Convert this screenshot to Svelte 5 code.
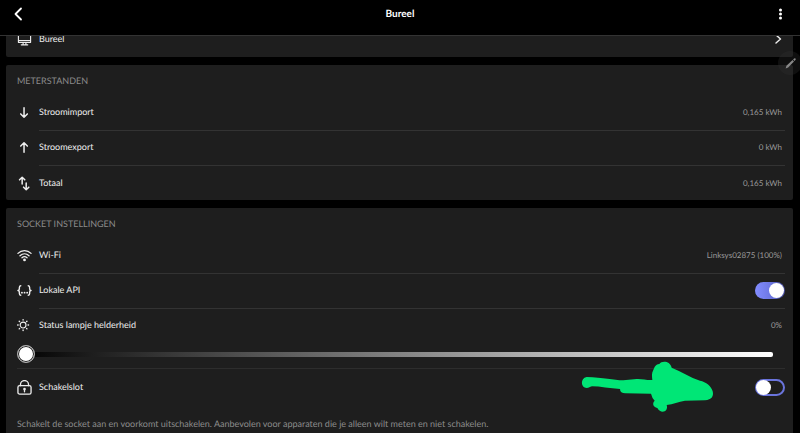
<script>
	let brightness = 0;
	let localApi = true;
	let switchLock = false;

	const readings = [
		{ icon: "down", label: "Stroomimport", value: "0,165 kWh" },
		{ icon: "up", label: "Stroomexport", value: "0 kWh" },
		{ icon: "both", label: "Totaal", value: "0,165 kWh" },
	];
</script>

<main>
	<header>
		<button class="back" aria-label="Terug">
			<svg viewBox="0 0 16 16"><path d="M10 2.500 4.500 8l5.500 5.500" stroke-width="1.800" /></svg>
		</button>
		<h1>Bureel</h1>
		<button class="more" aria-label="Meer">
			<svg viewBox="0 0 16 16" class="solid">
				<circle cx="7.500" cy="4" r="1.500" />
				<circle cx="7.500" cy="8" r="1.500" />
				<circle cx="7.500" cy="12" r="1.500" />
			</svg>
		</button>
	</header>

	<div class="body">
		<section class="device">
			<a href="#bureel" class="row">
				<svg class="icon" viewBox="0 0 16 16">
					<path d="M1.500 1.500h13v9.500h-13zM1.500 9h13M6.500 11v2.500M9.500 11v2.500M4.500 13.700h7" stroke-width="1.200" />
				</svg>
				<span class="label">Bureel</span>
				<svg class="chevron" viewBox="0 0 10 12"><path d="m3 2 4.500 4L3 10" stroke-width="1.400" /></svg>
			</a>
		</section>

		<section>
			<h2>METERSTANDEN</h2>
			<ul>
				{#each readings as { icon, label, value }}
					<li class="row">
						<svg class="icon" viewBox="0 0 16 16">
							{#if icon == "down"}
								<path d="M7.500 3v10M4 9.500 7.500 13 11 9.500" stroke-width="1.600" />
							{:else if icon == "up"}
								<path d="M7.500 13V3M4 6.500 7.500 3 11 6.500" stroke-width="1.600" />
							{:else}
								<path d="M5.500 8.500V1.500M2.700 4.100l2.800-2.800 2.800 2.800M9.800 7.500v7M7 11.900l2.800 2.800 2.800-2.800" stroke-width="1.600" />
							{/if}
						</svg>
						<span class="label">{label}</span>
						<span class="value">{value}</span>
					</li>
				{/each}
			</ul>
		</section>

		<section>
			<h2>SOCKET INSTELLINGEN</h2>
			<ul>
				<li class="row">
					<svg class="icon" viewBox="0 0 16 16">
						<path d="M1 5.700c4-4 10-4 14 0M3.200 8.200c2.800-2.700 6.800-2.700 9.600 0M5.300 10.500c1.600-1.500 3.800-1.500 5.400 0" stroke-width="1.400" />
						<circle cx="8" cy="12.700" r="1.500" fill="#eee" stroke="none" />
					</svg>
					<span class="label">Wi-Fi</span>
					<span class="value">Linksys02875 (100%)</span>
				</li>
				<li class="row">
					<svg class="icon" viewBox="0 0 16 16">
						<path d="M4 3C2.500 3 2.500 3.600 2.500 5v1.500Q2.500 8 1 8q1.500 0 1.500 1.500V11c0 1.400 0 2 1.500 2M12 3c1.500 0 1.500.6 1.500 2v1.500Q13.500 8 15 8q-1.500 0-1.500 1.500V11c0 1.400 0 2-1.500 2" stroke-width="1.500" />
						<path d="M5.200 10.300h.1M8 10.300h.1M10.800 10.300h.1" stroke-width="1.900" />
					</svg>
					<label class="label" for="api">Lokale API</label>
					<input class="toggle" id="api" type="checkbox" bind:checked={localApi} />
				</li>
				<li class="brightness">
					<div class="row">
						<svg class="icon" viewBox="0 0 16 16">
							<circle cx="6.500" cy="7.500" r="3.100" stroke-width="1.200" />
							<path d="M6.500 1.700v.5M6.500 12.800v.5M.7 7.500h.5M11.800 7.500h.5M2.400 3.400l.3.3M10.300 11.300l.3.3M10.600 3.400l-.3.3M2.700 11.300l-.3.3" stroke-width="1.500" />
						</svg>
						<label class="label" for="brightness">Status lampje helderheid</label>
						<output class="value" for="brightness">{brightness}%</output>
					</div>
					<input id="brightness" type="range" min="0" max="100" bind:value={brightness} />
				</li>
				<li class="row lock">
					<svg class="icon" viewBox="0 0 16 16">
						<path d="M3.700 6V4.900a4.300 4.300 0 0 1 8.600 0V6" stroke-width="1.400" />
						<rect x="1" y="6" width="14" height="9" rx="1.800" stroke-width="1.400" />
						<path d="M8 10v2.500" stroke-width="1.400" />
						<circle cx="8" cy="9.700" r="1.400" fill="#eee" stroke="none" />
					</svg>
					<label class="label" for="lock">Schakelslot</label>
					<input class="toggle" id="lock" type="checkbox" bind:checked={switchLock} />
					<svg class="marker" viewBox="33 63 396 150">
						<path d="M50 111C30 114 32 144 50 144C58 144 58 140 66 139C90 139 120 146 150 147C150 156 156 160 166 160L243 161Q246 174 254 182C246 190 249 200 262 204C268 214 276 217 284 214C292 210 292 200 290 195C310 193 325 185 345 182L405 181C425 180 432 168 428 154C424 138 408 126 390 122C360 112 335 95 305 83C300 62 275 62 268 72C255 74 254 82 250 90C244 100 246 110 247 120C230 121 215 116 200 117L160 121C130 121 100 112 50 111Z" />
					</svg>
				</li>
			</ul>
			<p>Schakelt de socket aan en voorkomt uitschakelen. Aanbevolen voor apparaten die je alleen wilt meten en niet schakelen.</p>
		</section>
	</div>

	<button class="edit" aria-label="Bewerken">
		<svg viewBox="0 0 16 16">
			<path d="m2 14 1-3.300 7.500-7 1.800 1.800-7.200 7.300zM11.200 3l1.300-1.300q1-.5 1.600.2t.2 1.600L13 4.800z" />
		</svg>
	</button>
</main>

<style>
	:global(body) {
		background: #000;
	}

	main {
		position: relative;
		display: grid;
		grid-template-rows: auto 1fr;
		height: 100vh;
		overflow: hidden;
		background: #000;
		color: #eee;
		font-family: Lato, sans-serif;
		font-size: 9px;
		line-height: 12px;
		text-rendering: geometricPrecision;
	}

	h1,
	h2,
	p,
	ul {
		margin: 0;
		padding: 0;
	}

	ul {
		list-style: none;
	}

	button {
		padding: 0;
		border: 0;
		background: none;
	}

	svg {
		display: block;
		fill: none;
		stroke: #eee;
		stroke-linecap: round;
		stroke-linejoin: round;
	}

	header {
		display: grid;
		grid-template-columns: 16px 1fr 16px;
		align-items: center;
		box-sizing: border-box;
		height: 36px;
		padding: 0 11px 8px;
		border-bottom: 1px solid #333;
	}

	header svg {
		width: 16px;
		height: 16px;
		stroke: #fff;
	}

	header .solid {
		fill: #fff;
		stroke: none;
	}

	h1 {
		color: #fff;
		font-size: 10px;
		font-weight: bold;
		text-align: center;
	}

	.body {
		display: flex;
		flex-direction: column;
		gap: 8px;
		min-height: 0;
		padding: 0 7px 0 6px;
		overflow: hidden;
	}

	section {
		flex-shrink: 0;
		padding: 0 8px 0 11px;
		border-radius: 2px;
		background: #1e1e1e;
	}

	/* scrolled half under the title bar */
	.device {
		margin-top: -15px;
	}

	.device .row {
		min-height: 36px;
	}

	.device .label {
		line-height: 8px;
	}

	h2 {
		padding: 10px 0 9px;
		color: #8c8c8c;
		font-size: 9px;
		font-weight: normal;
	}

	.row {
		position: relative;
		display: flex;
		align-items: center;
		gap: 7px;
		min-height: 34px;
		color: inherit;
		text-decoration: none;
	}

	li.row:not(:last-child) {
		min-height: 32px;
		padding-bottom: 3px;
	}

	li.row:not(:last-child)::after {
		content: "";
		position: absolute;
		right: 0;
		bottom: 0;
		left: 22px;
		height: 1px;
		background: #333;
	}

	.icon {
		flex: none;
		width: 15px;
		height: 15px;
	}

	.label {
		flex: 1;
	}

	.value {
		padding-right: 3px;
		color: #999;
		font-size: 8px;
	}

	.chevron {
		width: 10px;
		height: 12px;
		margin-right: 2px;
	}

	.brightness {
		border-bottom: 1px solid #2d2d2d;
	}

	.brightness .row {
		min-height: 32px;
	}

	input {
		margin: 0;
		appearance: none;
	}

	input[type="range"] {
		display: block;
		width: calc(100% - 12px);
		height: 27px;
		background: none;
	}

	input[type="range"]::-webkit-slider-runnable-track {
		height: 5px;
		border-radius: 2px;
		background: linear-gradient(to right, #000, #1e1e1e 10%, #fff);
	}

	input[type="range"]::-webkit-slider-thumb {
		box-sizing: border-box;
		width: 18px;
		height: 18px;
		margin-top: -7px;
		border: 1px solid #aaa;
		border-radius: 50%;
		background: #fff;
		box-shadow: inset 0 0 0 1px #222;
		appearance: none;
	}

	.toggle {
		display: flex;
		box-sizing: border-box;
		width: 30px;
		height: 17px;
		border: 2px solid #6a74dc;
		border-radius: 9px;
	}

	.toggle::before {
		content: "";
		width: 15px;
		height: 15px;
		margin: -1px;
		border-radius: 50%;
		background: #fff;
	}

	.toggle:checked {
		justify-content: flex-end;
		border: 0;
		padding: 2px;
		background: linear-gradient(to right, #828cff, #6e78e4 50%, #4a50a0);
	}

	.lock {
		min-height: 36px;
	}

	.marker {
		position: absolute;
		top: -8px;
		right: 72px;
		width: 132px;
		height: 50px;
		overflow: visible;
		fill: #00e676;
		stroke: none;
	}

	p {
		padding: 13px 0 16px;
		color: #8c8c8c;
	}

	.edit {
		position: absolute;
		top: 51px;
		right: -2px;
		display: grid;
		place-items: center;
		width: 24px;
		height: 24px;
		border-radius: 50%;
		background: rgba(50, 50, 50, 0.3);
	}

	.edit svg {
		width: 13px;
		height: 13px;
		fill: #888;
		stroke: none;
	}
</style>
